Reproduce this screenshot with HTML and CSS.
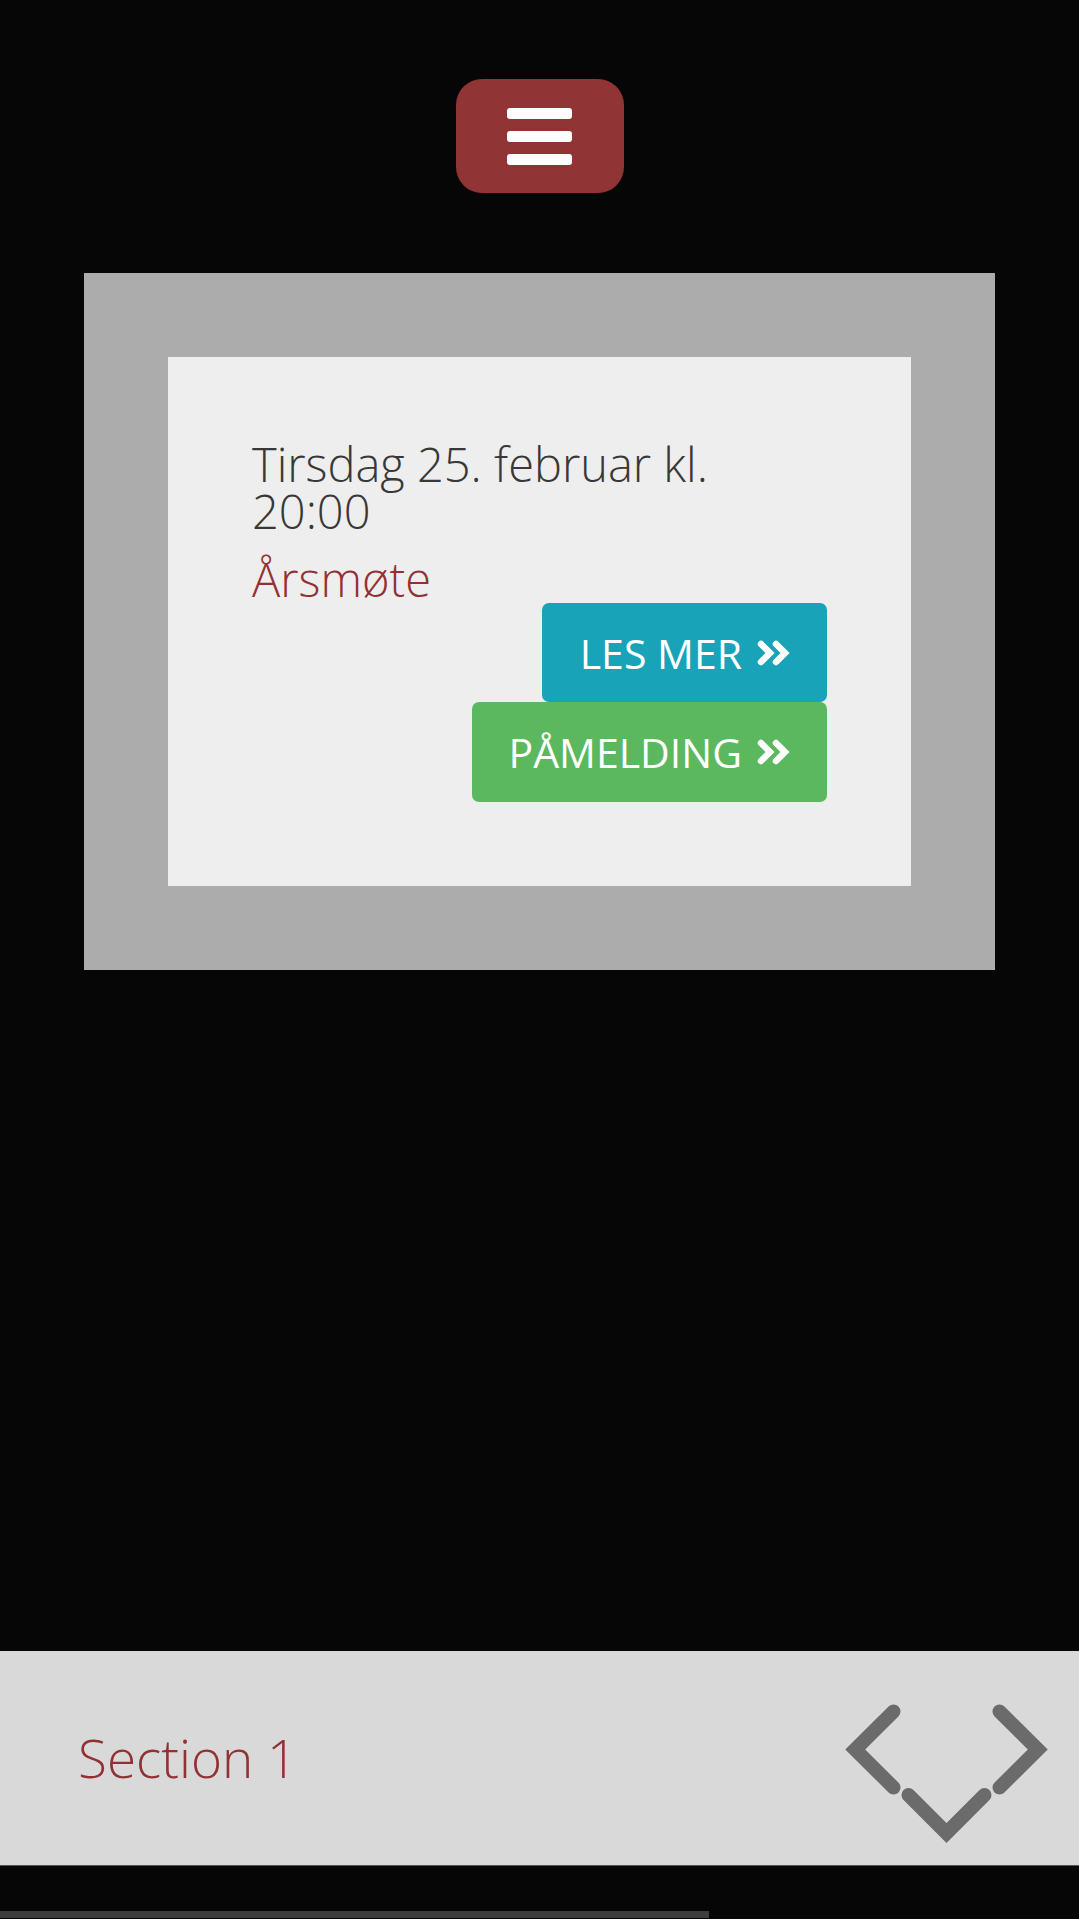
FILE: index.html
```html
<!DOCTYPE html>
<html lang="no">
<head>
<meta charset="utf-8">
<title>Arrangement</title>
<link rel="stylesheet" href="styles.css">
</head>
<body>
<div class="page">
  <header class="top">
    <button class="menu-btn" aria-label="Meny">
      <span class="bar"></span>
      <span class="bar"></span>
      <span class="bar"></span>
    </button>
  </header>

  <section class="frame">
    <div class="card">
      <h2 class="date">Tirsdag 25. februar kl. 20:00</h2>
      <h3 class="title">Årsmøte</h3>
      <div class="actions">
        <a class="btn btn-info" href="#">LES MER <svg class="dbl" viewBox="0 0 34 26"><polyline points="4,4 13,13 4,22"/><polyline points="19,4 28,13 19,22"/></svg></a>
        <a class="btn btn-success" href="#">PÅMELDING <svg class="dbl" viewBox="0 0 34 26"><polyline points="4,4 13,13 4,22"/><polyline points="19,4 28,13 19,22"/></svg></a>
      </div>
    </div>
  </section>

  <footer class="section-bar">
    <span class="section-name">Section 1</span>
    <svg class="nav" viewBox="0 0 210 144" width="210" height="144">
      <polyline points="51.5,9.5 13.2,47.5 51.5,85.5"/>
      <polyline points="157.5,9.5 195.8,47.5 157.5,85.5"/>
      <polyline points="66.5,93 104.5,131 142.5,93"/>
    </svg>
  </footer>
  <div class="scroll-track"><div class="scroll-thumb"></div></div>
</div>
</body>
</html>
```

FILE: styles.css
```css
html, body {
  margin: 0;
  padding: 0;
  background: #060606;
}

.page {
  height: 1919px;
  display: flex;
  flex-direction: column;
  font-family: "Open Sans", "Liberation Sans", sans-serif;
}

.top {
  display: flex;
  justify-content: center;
  padding-top: 79px;
}

.menu-btn {
  width: 168px;
  height: 114px;
  background: #903436;
  border: none;
  border-radius: 26px;
  display: flex;
  flex-direction: column;
  align-items: center;
  justify-content: center;
  gap: 12px;
  padding: 0;
}

.menu-btn .bar {
  display: block;
  width: 65px;
  height: 11px;
  background: #ffffff;
  border-radius: 3px;
}

.frame {
  margin: 80px 84px 0;
  background: #acacac;
  padding: 84px;
}

.card {
  background: #eeeeee;
  padding: 84px;
  display: flex;
  flex-direction: column;
}

.date {
  margin: 0;
  font-size: 47px;
  font-weight: 300;
  line-height: 47px;
  color: #383838;
}

.title {
  margin: 21px 0 0;
  font-size: 47px;
  font-weight: 300;
  line-height: 47px;
  color: #923133;
}

.actions {
  display: flex;
  flex-direction: column;
  align-items: flex-end;
}

.btn {
  display: inline-flex;
  align-items: center;
  gap: 15px;
  height: 100px;
  box-sizing: border-box;
  padding: 0 36px 0 38px;
  border-radius: 7px;
  color: #ffffff;
  text-decoration: none;
  font-size: 41px;
  font-weight: 400;
}

.btn-info {
  background: #19a3b8;
  height: 99px;
}

.btn-success {
  background: #5cb85e;
  padding-left: 36px;
}

.dbl {
  width: 34px;
  height: 26px;
  fill: none;
  stroke: #ffffff;
  stroke-width: 6.5;
  stroke-linecap: round;
  stroke-linejoin: miter;
}

.section-bar {
  margin-top: auto;
  height: 215px;
  box-sizing: border-box;
  background: #d9d9d9;
  border-bottom: 1px solid #555555;
  display: flex;
  align-items: center;
  justify-content: space-between;
  padding: 0 27px 0 78px;
}

.section-name {
  font-size: 53px;
  font-weight: 300;
  color: #923133;
  margin-top: -2px;
}

.nav {
  margin-top: 31px;
  fill: none;
  stroke: #6b6b6b;
  stroke-width: 14;
  stroke-linecap: round;
  stroke-linejoin: miter;
}

.scroll-track {
  margin-top: 45px;
  height: 8px;
}

.scroll-thumb {
  width: 709px;
  height: 7px;
  background: #3d3d3d;
}
```
